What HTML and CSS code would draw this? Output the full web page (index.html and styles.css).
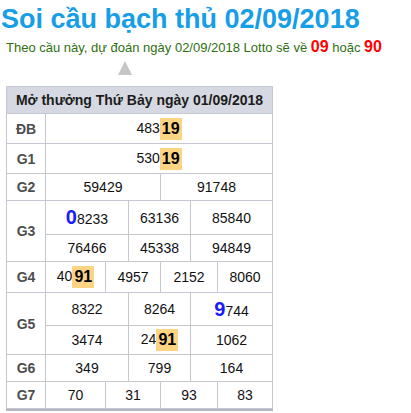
FILE: index.html
```html
<!DOCTYPE html>
<html lang="vi">
<head>
<meta charset="utf-8">
<title>Soi cầu bạch thủ 02/09/2018</title>
<link rel="stylesheet" href="styles.css">
</head>
<body>
<h1 class="title">Soi cầu bạch thủ 02/09/2018</h1>
<p class="lead">Theo cầu này, dự đoán ngày 02/09/2018 Lotto sẽ về <b class="hot">09</b> hoặc <b class="hot">90</b></p>
<div class="pointer"></div>
<div class="board">
  <div class="board-head">Mở thưởng Thứ Bảy ngày 01/09/2018</div>

  <div class="row">
    <div class="label">ĐB</div>
    <div class="cells c1"><div class="cell"><span>483<b class="mark">19</b></span></div></div>
  </div>

  <div class="row">
    <div class="label">G1</div>
    <div class="cells c1"><div class="cell"><span>530<b class="mark">19</b></span></div></div>
  </div>

  <div class="row">
    <div class="label">G2</div>
    <div class="cells c2"><div class="cell">59429</div><div class="cell">91748</div></div>
  </div>

  <div class="row">
    <div class="label">G3</div>
    <div class="cells c3 g3">
      <div class="cell"><span><b class="lead-digit">0</b>8233</span></div>
      <div class="cell">63136</div>
      <div class="cell">85840</div>
      <div class="cell">76466</div>
      <div class="cell">45338</div>
      <div class="cell">94849</div>
    </div>
  </div>

  <div class="row">
    <div class="label">G4</div>
    <div class="cells c4 g4">
      <div class="cell"><span>40<b class="mark">91</b></span></div>
      <div class="cell">4957</div>
      <div class="cell">2152</div>
      <div class="cell">8060</div>
    </div>
  </div>

  <div class="row">
    <div class="label">G5</div>
    <div class="cells c3 g5">
      <div class="cell">8322</div>
      <div class="cell">8264</div>
      <div class="cell"><span><b class="lead-digit">9</b>744</span></div>
      <div class="cell">3474</div>
      <div class="cell"><span>24<b class="mark">91</b></span></div>
      <div class="cell">1062</div>
    </div>
  </div>

  <div class="row">
    <div class="label">G6</div>
    <div class="cells c3"><div class="cell">349</div><div class="cell">799</div><div class="cell">164</div></div>
  </div>

  <div class="row">
    <div class="label">G7</div>
    <div class="cells c4"><div class="cell">70</div><div class="cell">31</div><div class="cell">93</div><div class="cell">83</div></div>
  </div>
</div>
</body>
</html>
```
FILE: styles.css
```css
* { box-sizing: border-box; }
html, body { margin: 0; padding: 0; background: #fff; }
body { font-family: "Liberation Sans", Arial, sans-serif; color: #111; }

.title {
  margin: 4px 0 0 1px;
  font-size: 27px;
  line-height: 31px;
  font-weight: bold;
  color: #179ee6;
}

.lead {
  margin: 3px 0 0 6px;
  font-size: 13px;
  line-height: 18px;
  color: #2f6f12;
}
.hot { color: #f00; font-size: 16px; }

.pointer {
  margin: 4px 0 0 118px;
  width: 0;
  height: 0;
  border-left: 7.5px solid transparent;
  border-right: 7.5px solid transparent;
  border-bottom: 14px solid #c6c6c6;
}

.board {
  margin: 11px 0 0 6px;
  width: 267px;
  background: #c5c7d2;
  padding: 1px 1px 1px;
  display: grid;
  gap: 1px;
  border-bottom: 2px solid #b3b6c0;
}

.board-head {
  height: 26px;
  background: #d6d9e1;
  display: flex;
  align-items: center;
  justify-content: center;
  font-weight: bold;
  font-size: 14px;
  color: #1c1c1c;
}

.row {
  display: grid;
  grid-template-columns: 38px 226px;
  gap: 1px;
}

.label {
  background: #fff;
  display: flex;
  align-items: center;
  justify-content: center;
  font-weight: bold;
  font-size: 14px;
  color: #4e4e4e;
}

.cells {
  display: grid;
  gap: 1px;
  grid-auto-rows: 26px;
}
.c1 { grid-template-columns: 226px; grid-auto-rows: 29px; }
.c2 { grid-template-columns: 114px 111px; }
.c3 { grid-template-columns: 82px 61px 81px; }
.c4 { grid-template-columns: 59px 54px 56px 54px; }
.g3 { grid-template-rows: 33px 26px; }
.g4 { grid-template-rows: 30px; }
.g5 { grid-template-rows: 32px 28px; }

.cell {
  background: #fff;
  display: flex;
  align-items: center;
  justify-content: center;
  font-size: 14px;
  color: #111;
}

.mark {
  display: inline-block;
  height: 22px;
  line-height: 22px;
  padding: 0 2px;
  background: #fdd384;
  font-size: 16px;
  color: #000;
  vertical-align: middle;
}

.lead-digit {
  font-size: 20px;
  color: #1a1aff;
}
```
